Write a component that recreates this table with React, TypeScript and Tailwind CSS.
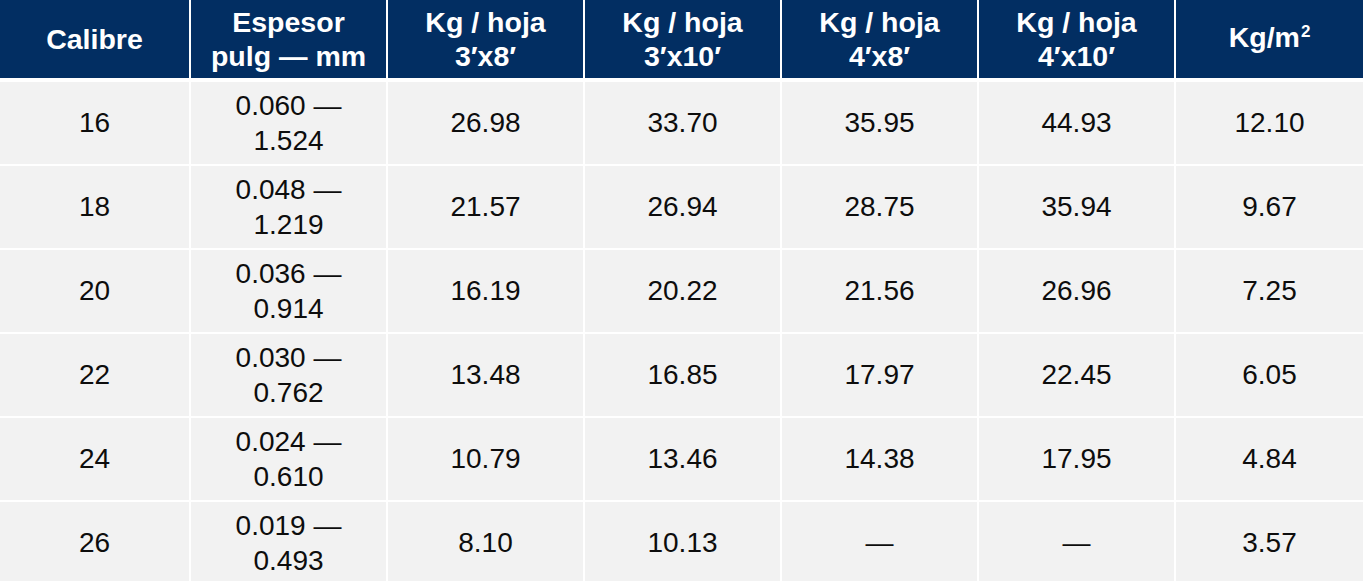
import React from "react";

const headers: React.ReactNode[] = [
  "Calibre",
  <>Espesor<br />pulg — mm</>,
  <>Kg / hoja<br />3′x8′</>,
  <>Kg / hoja<br />3′x10′</>,
  <>Kg / hoja<br />4′x8′</>,
  <>Kg / hoja<br />4′x10′</>,
  <>Kg/m<span className="text-[17px] relative -top-[10px] ml-[1px]">2</span></>,
];

const rows: [string, string, string, string[]][] = [
  ["16", "0.060 —", "1.524", ["26.98", "33.70", "35.95", "44.93", "12.10"]],
  ["18", "0.048 —", "1.219", ["21.57", "26.94", "28.75", "35.94", "9.67"]],
  ["20", "0.036 —", "0.914", ["16.19", "20.22", "21.56", "26.96", "7.25"]],
  ["22", "0.030 —", "0.762", ["13.48", "16.85", "17.97", "22.45", "6.05"]],
  ["24", "0.024 —", "0.610", ["10.79", "13.46", "14.38", "17.95", "4.84"]],
  ["26", "0.019 —", "0.493", ["8.10", "10.13", "—", "—", "3.57"]],
];

const cols = "grid grid-cols-[189px_195px_195px_195px_195px_195px_187px] gap-x-[2px]";

export default function App() {
  return (
    <div
      className="w-[1363px] h-[581px] overflow-hidden bg-white"
      style={{ fontFamily: '"Liberation Sans", Arial, sans-serif' }}
    >
      <div className={cols}>
        {headers.map((h, i) => (
          <div
            key={i}
            className="h-[78px] bg-[#022e62] text-white font-bold text-[28.5px] leading-[34px] flex items-center justify-center text-center"
          >
            <div>{h}</div>
          </div>
        ))}
      </div>
      <div className="mt-[4px] flex flex-col gap-y-[2px]">
        {rows.map(([cal, a, b, vals]) => (
          <div key={cal} className={cols}>
            <div className="h-[82px] bg-[#f2f2f2] text-[#0d0d0d] text-[28px] flex items-center justify-center">
              {cal}
            </div>
            <div className="h-[82px] bg-[#f2f2f2] text-[#0d0d0d] text-[28px] leading-[35px] flex flex-col items-center justify-center text-center">
              <div>{a}</div>
              <div>{b}</div>
            </div>
            {vals.map((v, j) => (
              <div
                key={j}
                className="h-[82px] bg-[#f2f2f2] text-[#0d0d0d] text-[28px] flex items-center justify-center"
              >
                {v}
              </div>
            ))}
          </div>
        ))}
      </div>
    </div>
  );
}
